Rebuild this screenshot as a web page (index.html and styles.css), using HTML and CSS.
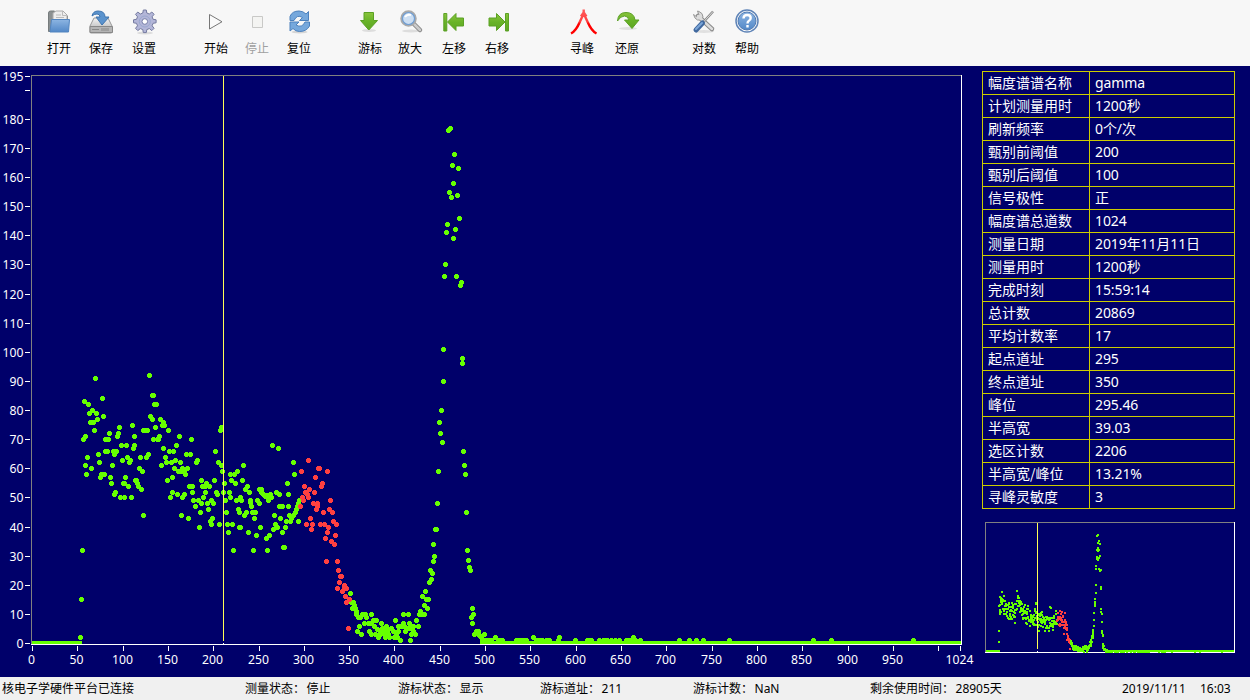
FILE: index.html
```html
<!DOCTYPE html>
<html lang="zh-CN">
<head>
<meta charset="utf-8">
<title>幅度谱</title>
<link rel="stylesheet" href="styles.css">
</head>
<body>
<svg class="defs" width="0" height="0">
  <defs>
    <linearGradient id="blue" x2="0" y2="1"><stop offset="0" stop-color="#8db5e2"/><stop offset="1" stop-color="#5288c7"/></linearGradient>
    <linearGradient id="green" x2="0" y2="1"><stop offset="0" stop-color="#8ac43c"/><stop offset=".5" stop-color="#68b328"/><stop offset="1" stop-color="#5da522"/></linearGradient>
    <linearGradient id="grey" x2="0" y2="1"><stop offset="0" stop-color="#f4f4f4"/><stop offset="1" stop-color="#a9a9a9"/></linearGradient>
    <linearGradient id="peak" x2="0" y2="1"><stop offset="0" stop-color="#ff5a5a"/><stop offset=".5" stop-color="#ff4040"/><stop offset=".6" stop-color="#f00"/></linearGradient>
  </defs>
</svg>
<header class="toolbar">
  <button class="tool"><svg class="icon" viewBox="0 0 28 28"><path d="M3.500 23.500V5q0-2 2-2h4l1 2v3h12v15z" fill="#8b9091" stroke="#777c7d"/><path d="M8 14V5l3-2h7l4 4v7z" fill="#ededed" stroke="#aaa"/><path d="M17.500 3v4.500H22M11 7h5M11 9.500h8" fill="none" stroke="#bbb"/><path d="M6.500 11.500h18l-1 12.500H5z" fill="url(#blue)" stroke="#5285c0"/></svg>打开</button>
  <button class="tool"><svg class="icon" viewBox="0 0 28 28"><path d="M7 10h14l4 8v6q0 1-1 1H4q-1 0-1-1v-6z" fill="url(#grey)" stroke="#999"/><path d="M3 18.500h22.500v6H3z" fill="#b4b4b4" stroke="#888"/><path d="M5 21.500h7M15 20v3m2-3v3m2-3v3m2-3v3" stroke="#888"/><path d="M5 8q1-5 6-5 7 0 7 6h4l-7 8-6-8h4q0-3-3-3-3 0-5 2z" fill="#5b93cd" stroke="#3f74ae"/></svg>保存</button>
  <button class="tool"><svg class="icon" viewBox="0 0 28 28"><ellipse cx="15" cy="25" rx="8" ry="1.500" fill="#ddd"/><g transform="translate(14.800 13.500)"><path d="M-2-8.500l.5-3h3l.5 3 2.500 1 2.500-2 2.300 2.300-2 2.500 1 2.500 3 .5v3l-3 .5-1 2.500 2 2.500-2.300 2.300-2.500-2-2.500 1-.5 3h-3l-.5-3-2.500-1-2.500 2-2.300-2.300 2-2.500-1-2.500-3-.5v-3l3-.5 1-2.500-2-2.500 2.300-2.300 2.500 2z" fill="#b3b6d8" stroke="#747a9f"/><circle r="5.500" fill="none" stroke="#9aa8cf"/><circle r="2.800" fill="#fff" stroke="#777fa8"/></g></svg>设置</button>
  <button class="tool"><svg class="icon" viewBox="0 0 28 28"><path d="M7.500 6.500v14.500l12.500-7.250z" fill="#fafafa" stroke="#777"/></svg>开始</button>
  <button class="tool off"><svg class="icon" viewBox="0 0 28 28"><path d="M9.500 8.500h10v11h-10z" fill="#f4f4f2" stroke="#c9c9c7"/></svg>停止</button>
  <button class="tool"><svg class="icon" viewBox="0 0 28 28"><ellipse cx="14.500" cy="24" rx="8" ry="1.500" fill="#d5d5d5"/><path d="M5 12.500V8.500Q7 3 14 3q4 0 7 3l2.500-2.500v9h-9l3-3Q12 6 9 12.500z" fill="#76a8dc" stroke="#4c81bd"/><path d="M24.500 14v4q-3 5.500-10 5.500-4 0-6.500-3l-3 2.500v-9h9l-3 3q6 3.500 9-3z" fill="#76a8dc" stroke="#4c81bd"/></svg>复位</button>
  <button class="tool"><svg class="icon" viewBox="0 0 28 28"><ellipse cx="13" cy="22.500" rx="7" ry="1.500" fill="#ddd"/><path d="M8 4.500h9.500v8h4L12.800 22 4.500 12.500H8z" fill="url(#green)" stroke="#5ba124"/></svg>游标</button>
  <button class="tool"><svg class="icon" viewBox="0 0 28 28"><ellipse cx="15" cy="23" rx="9" ry="1.500" fill="#ddd"/><path d="M17 15l7 7" stroke="#888" stroke-width="4.500" stroke-linecap="round"/><path d="M18 16l6 6" stroke="#ccc" stroke-width="2.500" stroke-linecap="round"/><circle cx="12.500" cy="10.500" r="7" fill="#cddff3" stroke="#aaa" stroke-width="2.500"/><circle cx="12.500" cy="10.500" r="6" fill="none" stroke="#6f9fd6" stroke-width="1.200"/><path d="M9 9q2-3 6-2" fill="none" stroke="#fff" stroke-width="2"/></svg>放大</button>
  <button class="tool"><svg class="icon" viewBox="0 0 28 28"><path d="M3.800 5.500h3v17.500h-3zM7.500 14l8.500-8.500v4.500h7.500v8H16v4.500z" fill="url(#green)" stroke="#5ba124"/></svg>左移</button>
  <button class="tool"><svg class="icon" viewBox="0 0 28 28"><path d="M22.500 5.500h3v17.500h-3zM22 14l-8.500-8.500v4.500H6v8h7.500v4.500z" fill="url(#green)" stroke="#5ba124"/></svg>右移</button>
  <button class="tool"><svg class="icon" viewBox="0 0 28 28"><path d="M3 25.500Q8 23 12 13.500l3.700-8 3.700 8Q23.500 23 28.500 25.500M15.700 1.500V9M13 8.500l2.700-4 2.700 4" fill="none" stroke="url(#peak)" stroke-width="2.400"/></svg>寻峰</button>
  <button class="tool"><svg class="icon" viewBox="0 0 28 28"><ellipse cx="15" cy="20.500" rx="9" ry="1.500" fill="#e0e0e0"/><path d="M4.500 13Q5 4.500 13 4.500q8 0 9 7.500h4l-7 8.500-7.500-8.500H16Q15 8 11.500 8 7.500 8 4.500 13z" fill="url(#green)" stroke="#5ba124"/></svg>还原</button>
  <button class="tool"><svg class="icon" viewBox="0 0 28 28"><ellipse cx="14" cy="23.500" rx="10" ry="1.500" fill="#e0e0e0"/><path d="M8 8l14 13" stroke="#888" stroke-width="4.500" stroke-linecap="round"/><path d="M3.500 6.500L5 10q2 3 6 2l2-3q0-4-4-5.500L7.500 3 9 7 7 9z" fill="#ddd" stroke="#999"/><path d="M8 8l14 13" stroke="#ddd" stroke-width="2.500" stroke-linecap="round"/><path d="M23 3.500L13 14.500" stroke="#888" stroke-width="2.500"/><path d="M23 3.500L13 14.500" stroke="#ddd"/><path d="M12.500 15L6 22" stroke="#41699f" stroke-width="5" stroke-linecap="round"/><path d="M12 15L6 21" stroke="#7ba6d8" stroke-width="2" stroke-linecap="round"/></svg>对数</button>
  <button class="tool"><svg class="icon" viewBox="0 0 28 28"><circle cx="14" cy="13" r="11" fill="#fff" stroke="#5f84b7" stroke-width="1.500"/><circle cx="14" cy="13" r="9" fill="url(#blue)" stroke="#5079b0"/><path d="M10.500 10.500q0-3.500 3.700-3.500 3.500 0 3.500 3 0 2-2 3-1.200.8-1.200 2.500M14.500 17v2.500" fill="none" stroke="#fff" stroke-width="2.400"/></svg>帮助</button>
</header>
<main class="workspace">
  <svg class="spectrum" id="spectrum" width="975" height="611" viewBox="0 66 975 611"></svg>
  <aside class="side">
    <table class="params"><tbody id="params"></tbody></table>
    <svg class="overview" id="overview" width="250" height="131" viewBox="0 0 250 131"></svg>
  </aside>
</main>
<footer class="status">
  <span>核电子学硬件平台已连接</span>
  <span>测量状态：<b>停止</b></span>
  <span>游标状态：<b>显示</b></span>
  <span>游标道址：<b>211</b></span>
  <span>游标计数：<b>NaN</b></span>
  <span>剩余使用时间：<b>28905天</b></span>
  <span>2019/11/11</span>
  <span>16:03</span>
</footer>
<script src="chart.js"></script>
</body>
</html>
```
FILE: styles.css
```css
* { box-sizing: border-box; }
body {
  margin: 0;
  width: 1250px;
  height: 700px;
  overflow: hidden;
  display: grid;
  grid-template-rows: 66px 611px 23px;
  background: #00006a;
  font-family: "Noto Sans", "Noto Sans CJK SC", sans-serif;
  font-size: 12px;
}
.defs { position: absolute; }
.toolbar {
  display: grid;
  grid-template-columns: 42px 43px 72px 41px 42px 71px 40px 44px 43px 85px 45px 77px 43px 24px;
  padding: 8px 0 0 47px;
  background: #f7f7f7;
}
.tool {
  width: 24px;
  height: 49px;
  padding: 0;
  border: 0;
  background: none;
  color: #000;
  font: 12px/18px "Noto Sans CJK SC", sans-serif;
  white-space: nowrap;
  display: flex;
  flex-direction: column;
  align-items: center;
  justify-content: flex-start;
  gap: 3px;
}
.tool.off { color: #a0a0a0; }
.icon { width: 28px; height: 28px; flex: none; overflow: visible; }
.workspace { display: grid; grid-template-columns: 975px 275px; }
.spectrum, .overview { display: block; }
.side { padding: 5px 0 0 7px; }
.params {
  width: 253px;
  border-collapse: collapse;
  table-layout: fixed;
  color: #fff;
  font-size: 14px;
  line-height: 20px;
}
.params tr { height: 23px; }
.params td { border: 1px solid #cccc00; padding: 0 0 0 5px; height: 23px; white-space: nowrap; }
.params .name { width: 107px; padding-bottom: 2px; line-height: 18px; font-family: "Noto Sans CJK SC", sans-serif; }
.params .value { letter-spacing: -0.1px; }
.overview { margin: 13px 0 0 3px; }
.axis { fill: #fff; font-family: "Noto Sans", sans-serif; font-size: 12.2px; }
.count { fill: #66ff00; }
.roi { fill: #ff4040; }
.cursor { fill: #ffff55; }
.edge { fill: #808080; }
.line { fill: #fff; }
.status {
  display: grid;
  grid-template-columns: 243px 153px 142px 153px 177px 252px 78px auto;
  padding-left: 2px;
  background: #f0f0f0;
  color: #000;
  font-size: 12px;
  line-height: 23px;
  white-space: nowrap;
}
.status b { font-weight: normal; margin-left: 1.5px; }
```
FILE: chart.js
```js
// Parameter list
const params = [
  ['幅度谱谱名称', 'gamma'], ['计划测量用时', '1200秒'], ['刷新频率', '0个/次'],
  ['甄别前阈值', '200'], ['甄别后阈值', '100'], ['信号极性', '正'],
  ['幅度谱总道数', '1024'], ['测量日期', '2019年11月11日'], ['测量用时', '1200秒'],
  ['完成时刻', '15:59:14'], ['总计数', '20869'], ['平均计数率', '17'],
  ['起点道址', '295'], ['终点道址', '350'], ['峰位', '295.46'], ['半高宽', '39.03'],
  ['选区计数', '2206'], ['半高宽/峰位', '13.21%'], ['寻峰灵敏度', '3']
];
document.getElementById('params').innerHTML = params
  .map(([k, v]) => `<tr><td class="name">${k}</td><td class="value">${v}</td></tr>`).join('');

// Spectrum points: each block has an origin and points in thirds of a unit
const blocks = [
  { kind: 'count', x: 0, y: 360, pts: '286,56 448,47 307,116 253,125 265,133 456,107 461,107 463,134 469,134 277,152 268,161 289,161 310,170 292,179 271,188 281,188 284,212 451,170 457,179 481,179 490,188 487,197 493,197 466,203 430,212 436,212 442,212 505,212 397,197 358,203 355,221 352,230 328,221 316,239 325,239 256,230 250,239 403,230 538,230 478,230 460,239 472,239 476,239 574,239 664,203 661,212 364,257 379,257 403,257 400,266 490,266 529,257 508,275 520,275 316,275 322,275 340,275 349,275 344,284 295,284 262,293 445,284 439,293 421,293 382,293 496,293 560,284 571,284 646,275 298,308 367,302 391,302 388,308 592,302 589,308 655,308 664,317 499,308 514,308 526,302 541,308 256,317 337,317 484,317 274,326 418,326 427,335 523,326 547,326 562,326 535,335 545,335 553,335 556,343 667,335 259,343 304,343 313,343 301,352 331,352 376,352 517,352 502,362 406,362 409,362 334,370 370,370 374,370 412,370 385,380 415,380 424,388 604,362 643,362 619,370 607,379 615,379 628,379 568,379 576,379 695,362 706,370 691,343 703,343 712,335 346,398 343,404 361,412 373,412 394,412 517,398 532,404 553,404 547,412 511,412 577,398 616,398 610,412 649,398 652,404 670,398 688,398 691,412 580,422 595,422 604,431 586,439 622,431 634,422 640,431 625,448 601,457 679,457 676,422 709,422 715,448 430,466 544,466 565,475 637,475 631,484 634,493 658,493 682,493 697,493 598,502 718,502' },
  { kind: 'count', x: 0, y: 520, pts: '241,352 244,238 247,91 685,38 700,91' },
  { kind: 'count', x: 220, y: 420, pts: '157,77 175,86 70,137 220,128 223,163 13,190 67,181 202,190 77,208 82,200 88,217 49,241 61,233 64,241 91,241 91,248 94,259 118,209 124,209 124,217 130,223 136,230 142,226 151,223 154,232 146,241 169,217 178,223 205,223 112,241 118,250 55,268 58,277 79,277 73,286 97,277 106,277 103,295 163,286 181,295 178,259 187,259 205,259 61,322 121,322 166,313 172,322 161,328 196,322 187,337 199,304 208,286 211,304 235,304 215,295 220,286 226,277 229,268 232,259 235,250 238,241 85,337 109,346 148,346 139,355 100,391 142,391 190,382 194,382' },
  { kind: 'roi', x: 220, y: 420, pts: '265,121 244,155 296,145 298,145 322,155 286,172 307,190 304,200 253,200 268,208 256,217 262,223 283,217 247,233 265,233 250,241 241,259 280,250 292,250 292,259 289,268 331,241 328,268 337,277 310,277 271,295 259,313 277,313 274,328 301,313 313,313 325,322 340,304 349,313 322,337 346,346 316,355 334,364 343,373 319,424 352,424 355,451 361,469 364,469' },
  { kind: 'roi', x: 320, y: 560, pts: '58,67 73,76 52,85 79,85 67,94 73,85 76,109 88,118 79,127 85,205' },
  { kind: 'count', x: 320, y: 560, pts: '91,100 94,127 100,127 97,145 103,136 106,145 109,154 109,163 115,172 121,172 127,163 136,163 139,172 154,163 112,214 118,200 124,223 133,190 145,190 154,190 160,181 169,181 163,199 148,214 154,223 166,223 172,208 175,232 181,223 184,190 187,205 181,215 193,214 193,223 199,199 196,232 205,223 205,208 208,232 214,205 220,214 223,232 226,181 229,223 232,232 235,214 241,241 235,200 244,199 250,190 256,214 262,205 253,200 268,190 250,163 265,163 271,205 274,223 271,241 280,214 286,223 280,199 289,181 295,199 298,163 302,154 313,163 307,163 322,145 313,136 307,109 316,94 319,118 325,118 328,67 334,58 337,40 331,31 340,4 445,0 448,22 451,31 457,145 460,163 454,172 457,190 463,223 469,214 475,214 478,226 484,232 493,223 487,241 496,241 502,241 508,241 514,241 526,232 544,241' },
  { kind: 'count', x: 420, y: 110, pts: '85,61 91,56 103,133 97,166 115,175 100,220 88,247 112,256 94,262 118,325 82,343 106,358 79,367 100,385 76,463 73,499 109,499 124,517 121,526 70,718 127,745 127,760 70,814' },
  { kind: 'count', x: 420, y: 380, pts: '64,91 58,127 61,160 67,187 130,214 133,256 136,283 55,274 139,397 52,370 46,448 49,448 142,511 40,493 43,529' },
  { kind: 'count', x: 500, y: 620, pts: '-4,61 8,61 50,61 56,61 62,61 68,61 74,61 79,61 100,52 109,61 118,61 127,61 139,61 148,61 178,52 175,61 226,61 262,61 268,61 274,61 298,61 310,61 316,61 322,61 334,61 346,61 358,61 379,61 388,61 400,52 394,61 406,61 421,61 538,61 568,61 589,61 610,61 688,61 940,61 994,61 1240,61' }
];
const points = blocks.flatMap(b => b.pts.split(' ').map(p => {
  const [x, y] = p.split(',').map(Number);
  return { kind: b.kind, x: b.x + Math.floor(x / 3), y: b.y + Math.floor(y / 3) };
}));
const rect = (x, y, w, h, cls) => `<rect x="${x}" y="${y}" width="${w}" height="${h}" class="${cls}"/>`;

// Main chart
let out = '<g shape-rendering="crispEdges">';
out += rect(31, 75, 931, 1, 'edge') + rect(31, 75, 1, 569, 'edge');
out += rect(961, 75, 1, 570, 'line') + rect(31, 644, 931, 1, 'line');
out += rect(32, 641, 50, 3, 'count') + rect(480, 641, 481, 3, 'count');
for (const kind of ['count', 'roi']) {
  const d = points.filter(p => p.kind === kind)
    .map(p => `M${p.x - 2} ${p.y - 1}h5v3h-5zM${p.x - 1} ${p.y - 2}h3v5h-3z`).join('');
  out += `<path class="${kind}" d="${d}"/>`;
}
out += rect(223, 76, 1, 565, 'cursor') + rect(223, 643, 1, 1, 'line');
let labels = '';
for (const v of [...Array(20).keys()].map(i => i * 10).concat(195)) {
  const y = Math.max(76, Math.round(643 - v * 2.912));
  out += rect(25, y, 5, 1, 'line');
  if (v !== 190) labels += `<text x="23.500" y="${y + 5}" text-anchor="end">${v}</text>`;
}
for (const v of [...Array(21).keys()].map(i => i * 50).concat(1024)) {
  const x = Math.floor(32.35 + v * 0.9066);
  out += rect(x, 646, 1, 5, 'line');
  if (v !== 1000) labels += `<text x="${x - 0.5}" y="664" text-anchor="middle">${v}</text>`;
}
out += `</g><g class="axis">${labels}</g>`;
document.getElementById('spectrum').innerHTML = out;

// Overview chart
let mini = '<g shape-rendering="crispEdges">';
mini += rect(0, 0, 250, 1, 'edge') + rect(0, 0, 1, 130, 'edge');
mini += rect(249, 0, 1, 131, 'line') + rect(0, 130, 250, 1, 'line');
mini += rect(1, 128, 14, 2, 'count') + rect(120, 128, 129, 2, 'count');
for (const p of points) {
  mini += rect(Math.floor((p.x - 31) * 0.268 - 0.2), Math.round((p.y - 75) * 0.2275), 2, 2, p.kind);
}
mini += rect(52, 1, 1, 126, 'cursor') + rect(52, 129, 1, 1, 'line') + '</g>';
document.getElementById('overview').innerHTML = mini;
```
